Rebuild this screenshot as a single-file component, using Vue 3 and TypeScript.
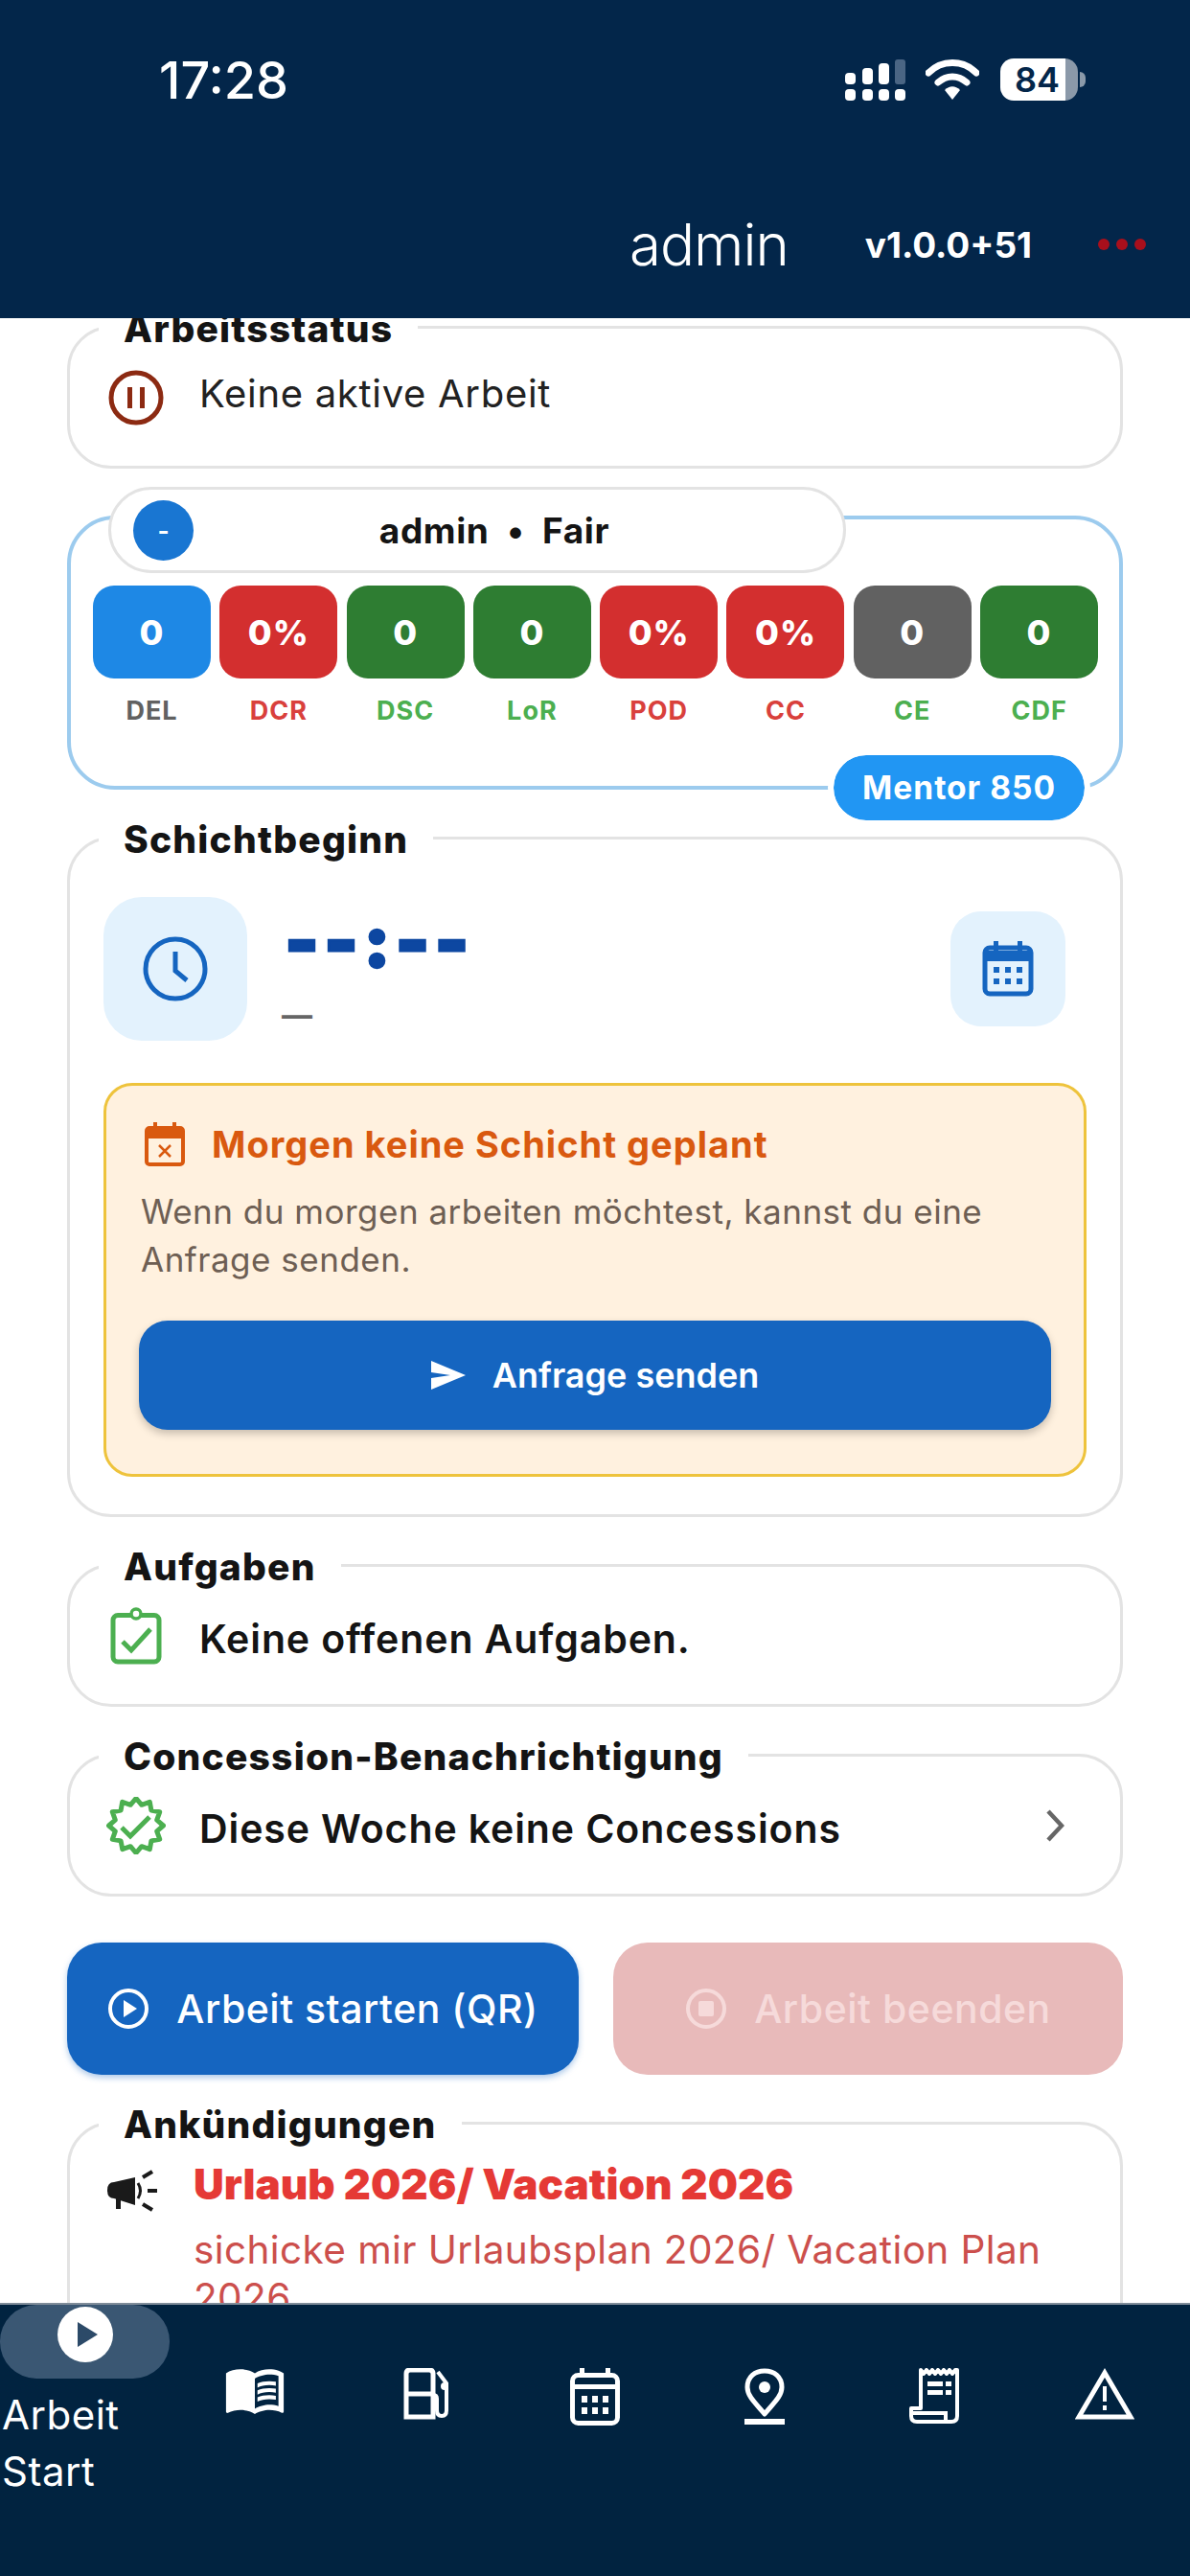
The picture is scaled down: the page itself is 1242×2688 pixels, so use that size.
<template>
  <div class="screen">
    <header class="top">
      <div class="status">
        <span class="clock">17:28</span>
        <div class="status-icons">
          <svg class="signal" viewBox="0 0 63 43">
            <rect x="0" y="14" width="11" height="12" rx="4" fill="#fff" />
            <rect x="18" y="9" width="11" height="17" rx="4" fill="#fff" />
            <rect x="35" y="4" width="11" height="22" rx="4" fill="#fff" />
            <rect x="52" y="0" width="11" height="26" rx="3" fill="#4a6584" />
            <rect x="0" y="31" width="11" height="12" rx="4" fill="#fff" />
            <rect x="18" y="31" width="11" height="12" rx="4" fill="#fff" />
            <rect x="35" y="31" width="11" height="12" rx="4" fill="#fff" />
            <rect x="52" y="31" width="11" height="12" rx="4" fill="#fff" />
          </svg>
          <svg class="wifi" viewBox="0 0 56 43">
            <path d="M3 14 C17 0 39 0 53 14" fill="none" stroke="#fff" stroke-width="7" stroke-linecap="round" />
            <path d="M13 24 C22 16 34 16 43 24" fill="none" stroke="#fff" stroke-width="7" stroke-linecap="round" />
            <path d="M20 32 C25 27 31 27 36 32 L28 42 Z" fill="#fff" />
          </svg>
          <div class="battery"><span>84</span></div>
          <i class="battery-cap"></i>
        </div>
      </div>
      <div class="appbar">
        <span class="user">admin</span>
        <span class="version">v1.0.0+51</span>
        <span class="dots"><i></i><i></i><i></i></span>
      </div>
    </header>

    <main class="content">
      <section class="card row-card">
        <h3 class="card-title">Arbeitsstatus</h3>
        <div class="icon-slot">
          <svg width="58" height="58" viewBox="0 0 58 58">
            <circle cx="29" cy="29" r="26" fill="none" stroke="#8c2a12" stroke-width="5" />
            <rect x="20" y="18" width="5" height="22" fill="#8c2a12" />
            <rect x="33" y="18" width="5" height="22" fill="#8c2a12" />
          </svg>
        </div>
        <span class="plain-text">Keine aktive Arbeit</span>
      </section>

      <section class="score-card">
        <div class="score-head">
          <span class="avatar">-</span>
          <span class="score-name">admin&nbsp; •&nbsp; Fair</span>
        </div>
        <div class="tiles">
          <div v-for="t in tiles" :key="t.label" class="tile">
            <div :class="['tile-value', t.bg]">{{ t.value }}</div>
            <span :class="['tile-label', t.fg]">{{ t.label }}</span>
          </div>
        </div>
        <span class="mentor">Mentor 850</span>
      </section>

      <section class="card shift-card">
        <h3 class="card-title">Schichtbeginn</h3>
        <div class="shift-top">
          <div class="clock-box">
            <svg width="68" height="68" viewBox="0 0 68 68">
              <circle cx="34" cy="34" r="31" fill="none" stroke="#1565c0" stroke-width="5" />
              <path d="M34 16 V36 L46 46" fill="none" stroke="#1565c0" stroke-width="5" />
            </svg>
          </div>
          <div class="shift-time">
            <span class="time-value">--:--</span>
            <span class="time-sub">—</span>
          </div>
          <div class="cal-box">
            <svg width="54" height="58" viewBox="0 0 54 58">
              <rect x="3" y="7" width="48" height="48" rx="5" fill="none" stroke="#1565c0" stroke-width="5" />
              <rect x="3" y="10" width="48" height="11" fill="#1565c0" />
              <rect x="12" y="0" width="5" height="10" fill="#1565c0" />
              <rect x="37" y="0" width="5" height="10" fill="#1565c0" />
              <g fill="#1565c0">
                <rect x="12" y="27" width="6" height="6" /><rect x="24" y="27" width="6" height="6" /><rect x="36" y="27" width="6" height="6" />
                <rect x="12" y="39" width="6" height="6" /><rect x="24" y="39" width="6" height="6" /><rect x="36" y="39" width="6" height="6" />
              </g>
            </svg>
          </div>
        </div>
        <div class="notice">
          <div class="notice-head">
            <svg width="42" height="46" viewBox="0 0 42 46">
              <rect x="2" y="6" width="38" height="38" rx="3" fill="none" stroke="#d9590f" stroke-width="4" />
              <rect x="2" y="8" width="38" height="9" fill="#d9590f" />
              <rect x="9" y="0" width="4" height="8" fill="#d9590f" />
              <rect x="29" y="0" width="4" height="8" fill="#d9590f" />
              <path d="M15 24 L27 36 M27 24 L15 36" stroke="#d9590f" stroke-width="2.5" />
            </svg>
            <span class="notice-title">Morgen keine Schicht geplant</span>
          </div>
          <p class="notice-text">Wenn du morgen arbeiten möchtest, kannst du eine Anfrage senden.</p>
          <button class="request-btn">
            <svg width="36" height="30" viewBox="0 0 36 30">
              <path d="M0 0 L36 15 L0 30 L0 18 L20 15 L0 12 Z" fill="#fff" />
            </svg>
            Anfrage senden
          </button>
        </div>
      </section>

      <section class="card row-card">
        <h3 class="card-title">Aufgaben</h3>
        <div class="icon-slot">
          <svg width="54" height="60" viewBox="0 0 54 60">
            <rect x="3" y="8.5" width="48" height="48.5" rx="5" fill="none" stroke="#4caf50" stroke-width="5" />
            <circle cx="27" cy="7" r="5" fill="#fff" stroke="#4caf50" stroke-width="3.5" />
            <path d="M13 36 L22 45 L42 23" fill="none" stroke="#4caf50" stroke-width="5" />
          </svg>
        </div>
        <span class="strong-text">Keine offenen Aufgaben.</span>
      </section>

      <section class="card row-card">
        <h3 class="card-title">Concession-Benachrichtigung</h3>
        <div class="icon-slot">
          <svg width="62" height="60" viewBox="0 0 62 60">
            <path :d="badgePath" fill="none" stroke="#4caf50" stroke-width="5" stroke-linejoin="round" />
            <path d="M16 32 L25 41 L45 21" fill="none" stroke="#4caf50" stroke-width="5" />
          </svg>
        </div>
        <span class="strong-text">Diese Woche keine Concessions</span>
        <svg class="chevron" width="20" height="34" viewBox="0 0 20 34">
          <path d="M3 2 L17 17 L3 32" fill="none" stroke="#666" stroke-width="4.5" />
        </svg>
      </section>

      <div class="actions">
        <button class="action start">
          <svg width="44" height="44" viewBox="0 0 44 44">
            <circle cx="22" cy="22" r="19" fill="none" stroke="#fff" stroke-width="4" />
            <path d="M17 13 L31 22 L17 31 Z" fill="#fff" />
          </svg>
          Arbeit starten (QR)
        </button>
        <button class="action stop">
          <svg width="44" height="44" viewBox="0 0 44 44">
            <circle cx="22" cy="22" r="19" fill="none" stroke="#f6dada" stroke-width="4" />
            <rect x="14" y="14" width="16" height="16" rx="2" fill="#f6dada" />
          </svg>
          Arbeit beenden
        </button>
      </div>

      <section class="card news-card">
        <h3 class="card-title">Ankündigungen</h3>
        <div class="news-row">
          <svg class="megaphone" width="54" height="44" viewBox="0 0 54 44">
            <path d="M8 13 L30 8 V37 L8 30 Q1 30 1 21.5 Q1 13 8 13 Z" fill="#1a1a1a" />
            <rect x="10" y="29" width="5" height="12" fill="#1a1a1a" />
            <path d="M33 14 Q38 22 33 30" fill="none" stroke="#1a1a1a" stroke-width="3" />
            <path d="M38 8 L48 2 M43 22 H53 M38 36 L48 42" stroke="#1a1a1a" stroke-width="4" />
          </svg>
          <div class="news-body">
            <h4 class="news-title">Urlaub 2026/ Vacation 2026</h4>
            <p class="news-text">sichicke mir Urlaubsplan 2026/ Vacation Plan 2026</p>
          </div>
        </div>
      </section>
    </main>

    <nav class="bottom">
      <div class="nav-start">
        <div class="nav-pill">
          <svg width="58" height="58" viewBox="0 0 58 58">
            <circle cx="29" cy="29" r="29" fill="#fff" />
            <path d="M21 16 L42 29 L21 42 Z" fill="#2c4a68" />
          </svg>
        </div>
        <span class="nav-label">Arbeit<br />Start</span>
      </div>

      <div class="nav-item">
        <svg width="66" height="52" viewBox="0 0 24 19">
          <path fill="#fff" d="M21 1c-1.11-.35-2.33-.5-3.5-.5-1.95 0-4.05.4-5.5 1.5C10.55.9 8.45.5 6.5.5S2.45.9 1 2v14.65c0 .25.25.5.5.5.1 0 .15-.05.25-.05C3.1 16.45 5.05 16 6.5 16c1.95 0 4.05.4 5.5 1.5 1.35-.85 3.8-1.5 5.5-1.5 1.65 0 3.35.3 4.75 1.05.1.05.15.05.25.05.25 0 .5-.25.5-.5V2c-.6-.45-1.25-.75-2-1zm0 13.5c-1.1-.35-2.3-.5-3.5-.5-1.7 0-4.15.65-5.5 1.5V4c1.35-.85 3.8-1.5 5.5-1.5 1.2 0 2.4.15 3.5.5v11.5z" />
          <path fill="#fff" d="M17.5 6.5c.88 0 1.73.09 2.5.26V5.24C19.21 5.09 18.36 5 17.5 5c-1.7 0-3.24.29-4.5.83v1.66c1.13-.64 2.7-.99 4.5-.99zM13 8.49v1.66c1.13-.64 2.7-.99 4.5-.99.88 0 1.73.09 2.5.26V7.9c-.79-.15-1.64-.24-2.5-.24-1.7 0-3.24.3-4.5.83zM17.5 10.33c-1.7 0-3.24.29-4.5.83v1.66c1.13-.64 2.7-.99 4.5-.99.88 0 1.73.09 2.5.26v-1.52c-.79-.16-1.64-.24-2.5-.24z" />
        </svg>
      </div>

      <div class="nav-item">
        <svg class="gas" width="50" height="54" viewBox="0 0 50 54">
          <path d="M3 6 Q3 2 7 2 H27 Q31 2 31 6 V51 H3 Z" fill="none" stroke="#fff" stroke-width="5" />
          <path d="M3 27 H31" stroke="#fff" stroke-width="5" />
          <path d="M36 4 L45 16 V44 Q45 50 40 50 Q35 50 35 44 V32 Q35 28 31 28" fill="none" stroke="#fff" stroke-width="4" />
          <circle cx="43" cy="19" r="4" fill="#fff" />
        </svg>
      </div>

      <div class="nav-item">
        <svg width="52" height="60" viewBox="0 0 52 60">
          <rect x="2.5" y="7.5" width="47" height="50" rx="6" fill="none" stroke="#fff" stroke-width="5" />
          <rect x="2" y="17" width="48" height="5" fill="#fff" />
          <rect x="10" y="0" width="5" height="9" fill="#fff" />
          <rect x="37" y="0" width="5" height="9" fill="#fff" />
          <g fill="#fff">
            <rect x="12" y="29" width="6" height="7" /><rect x="23" y="29" width="6" height="7" /><rect x="34" y="29" width="6" height="7" />
            <rect x="12" y="41" width="6" height="7" /><rect x="23" y="41" width="6" height="7" /><rect x="34" y="41" width="6" height="7" />
          </g>
        </svg>
      </div>

      <div class="nav-item">
        <svg width="42" height="60" viewBox="0 0 42 60">
          <path d="M21 48 C13 38 3 30 3 20 C3 9 11 3 21 3 C31 3 39 9 39 20 C39 30 29 38 21 48 Z" fill="none" stroke="#fff" stroke-width="5" stroke-linejoin="round" />
          <circle cx="21" cy="20" r="6" fill="#fff" />
          <rect x="0" y="53" width="42" height="6" fill="#fff" />
        </svg>
      </div>

      <div class="nav-item">
        <svg width="54" height="58" viewBox="0 0 54 58">
          <path d="M12 2 L15 6 L18 2 L21 6 L24 2 L27 6 L30 2 L33 6 L36 2 L39 6 L42 2 L45 6 L48 2 L50 2 V50 Q50 56 44 56 H8 Q2 56 2 50 V42 H12 Z" fill="none" stroke="#fff" stroke-width="4" stroke-linejoin="round" />
          <path d="M4 47 H38 V54" fill="none" stroke="#fff" stroke-width="4" />
          <g fill="#fff">
            <rect x="19" y="14" width="16" height="5" /><rect x="38" y="14" width="6" height="5" />
            <rect x="19" y="23" width="16" height="5" /><rect x="38" y="23" width="6" height="5" />
          </g>
        </svg>
      </div>

      <div class="nav-item">
        <svg width="62" height="54" viewBox="0 0 62 54">
          <path d="M31 5 L58 51 H4 Z" fill="none" stroke="#fff" stroke-width="5" stroke-linejoin="miter" />
          <rect x="29" y="19" width="4" height="16" fill="#fff" />
          <rect x="29" y="39" width="4" height="5" fill="#fff" />
        </svg>
      </div>
    </nav>
  </div>
</template>

<script setup lang="ts">
interface Tile {
  label: string
  value: string
  bg: string
  fg: string
}

const tiles: Tile[] = [
  { label: 'DEL', value: '0', bg: 'blue', fg: 'gray-text' },
  { label: 'DCR', value: '0%', bg: 'red', fg: 'red-text' },
  { label: 'DSC', value: '0', bg: 'green', fg: 'green-text' },
  { label: 'LoR', value: '0', bg: 'green', fg: 'green-text' },
  { label: 'POD', value: '0%', bg: 'red', fg: 'red-text' },
  { label: 'CC', value: '0%', bg: 'red', fg: 'red-text' },
  { label: 'CE', value: '0', bg: 'gray', fg: 'green-text' },
  { label: 'CDF', value: '0', bg: 'green', fg: 'green-text' }
]

// 12-point seal outline
const badgePath = Array.from({ length: 24 }, (_, i) => {
  const r = i % 2 === 0 ? 28.5 : 22.5
  const a = (i * Math.PI) / 12 - Math.PI / 2
  const x = (31 + r * Math.cos(a)).toFixed(1)
  const y = (30 + r * Math.sin(a)).toFixed(1)
  return `${i === 0 ? 'M' : 'L'}${x} ${y}`
}).join(' ') + ' Z'
</script>

<style>
html,
body {
  margin: 0;
  background: #fff;
}
</style>

<style scoped>
.screen {
  width: 1242px;
  height: 2688px;
  display: flex;
  flex-direction: column;
  overflow: hidden;
  font-family: Inter, "Noto Sans", sans-serif;
  color: #141414;
}

/* header */
.top {
  height: 332px;
  flex: none;
  background: #03264a;
  color: #fff;
  box-sizing: border-box;
  padding-top: 52px;
}

.status {
  display: flex;
  justify-content: space-between;
  align-items: center;
  padding: 0 109px 0 166px;
  height: 62px;
}

.clock {
  font-size: 54px;
  font-weight: 500;
  letter-spacing: 0;
}

.status-icons {
  display: flex;
  align-items: center;
}

.signal {
  width: 63px;
  height: 43px;
  margin-right: 21px;
}

.wifi {
  width: 56px;
  height: 43px;
  margin-right: 22px;
}

.battery {
  width: 81px;
  height: 44px;
  border-radius: 14px;
  background: linear-gradient(90deg, #fff 84%, #8b99a9 84%);
  color: #03264a;
  font-size: 36px;
  font-weight: 600;
  display: flex;
  align-items: center;
  padding-left: 15px;
  box-sizing: border-box;
}

.battery-cap {
  width: 6px;
  height: 16px;
  margin-left: 2px;
  background: #8b99a9;
  border-radius: 0 6px 6px 0;
}

.appbar {
  display: flex;
  justify-content: flex-end;
  align-items: center;
  height: 80px;
  margin-top: 101px;
  padding-right: 46px;
}

.user {
  font-size: 60px;
  font-weight: 300;
  letter-spacing: -1px;
  margin-right: 80px;
}

.version {
  font-size: 37px;
  font-weight: 700;
  margin-right: 69px;
}

.dots {
  display: flex;
  gap: 7px;
}

.dots i {
  width: 12px;
  height: 12px;
  border-radius: 50%;
  background: #a80f1c;
}

/* content */
.content {
  flex: 1;
  min-height: 0;
  overflow: hidden;
  display: flex;
  flex-direction: column;
  gap: 49px;
  padding: 8px 70px 0;
  background: #fff;
}

.card {
  position: relative;
  flex: none;
  background: #fff;
  border: 3px solid #e3e3e3;
  border-radius: 46px;
}

.card-title {
  position: absolute;
  top: -23px;
  left: 30px;
  margin: 0;
  padding: 0 26px;
  background: #fff;
  font-size: 39px;
  line-height: 46px;
  font-weight: 800;
  letter-spacing: 1.2px;
  color: #141414;
}

.row-card {
  height: 149px;
  box-sizing: border-box;
  display: flex;
  align-items: center;
  padding: 0 58px 0 38px;
}

.icon-slot {
  flex: none;
  width: 62px;
  margin-right: 35px;
  display: flex;
  justify-content: center;
}

.plain-text {
  font-size: 40px;
  letter-spacing: 0.7px;
  color: #222;
  margin-bottom: 8px;
}

.strong-text {
  font-size: 41px;
  font-weight: 600;
  letter-spacing: 0.9px;
  flex: 1;
  margin-top: 6px;
}

.chevron {
  flex: none;
}

/* score */
.score-card {
  position: relative;
  flex: none;
  height: 286px;
  box-sizing: border-box;
  border: 4px solid #9ccbee;
  border-radius: 50px;
  padding: 69px 23px 0;
}

.score-head {
  position: absolute;
  top: -34px;
  left: 39px;
  width: 770px;
  height: 90px;
  box-sizing: border-box;
  background: #fff;
  border: 3px solid #e3e3e3;
  border-radius: 45px;
  display: flex;
  align-items: center;
  padding-left: 23px;
}

.avatar {
  width: 63px;
  height: 63px;
  border-radius: 50%;
  background: #1976d2;
  color: #fff;
  font-size: 26px;
  font-weight: 700;
  display: flex;
  align-items: center;
  justify-content: center;
  flex: none;
}

.score-name {
  flex: 1;
  text-align: center;
  font-size: 37px;
  font-weight: 700;
  letter-spacing: 0.6px;
  padding-right: 50px;
}

.tiles {
  display: grid;
  grid-template-columns: repeat(8, 123px);
  column-gap: 9.3px;
}

.tile {
  display: flex;
  flex-direction: column;
  align-items: center;
}

.tile-value {
  width: 100%;
  height: 97px;
  border-radius: 22px;
  display: flex;
  align-items: center;
  justify-content: center;
  color: #fff;
  font-size: 36px;
  font-weight: 800;
  letter-spacing: 1px;
}

.blue { background: #1e88e5; }
.red { background: #d32f2f; }
.green { background: #2e7d32; }
.gray { background: #616161; }

.tile-label {
  margin-top: 19px;
  font-size: 27px;
  line-height: 30px;
  font-weight: 700;
  letter-spacing: 1px;
}

.gray-text { color: #616161; }
.red-text { color: #d9403c; }
.green-text { color: #4caf50; }

.mentor {
  position: absolute;
  right: 36px;
  bottom: -36px;
  padding: 0 30px;
  height: 68px;
  line-height: 68px;
  background: #2196f3;
  color: #fff;
  border-radius: 34px;
  font-size: 33.5px;
  font-weight: 700;
  letter-spacing: 1px;
  outline: 6px solid #fff;
}

/* shift */
.shift-card {
  height: 710px;
  box-sizing: border-box;
  padding: 60px 35px 0;
}

.shift-top {
  display: flex;
  align-items: center;
  height: 150px;
}

.clock-box {
  width: 150px;
  height: 150px;
  border-radius: 40px;
  background: #e3f2fd;
  display: flex;
  align-items: center;
  justify-content: center;
  flex: none;
}

.shift-time {
  flex: 1;
  display: flex;
  flex-direction: column;
  padding-left: 39px;
  height: 150px;
}

.time-value {
  font-size: 76px;
  line-height: 90px;
  font-weight: 900;
  color: #0d47a1;
  letter-spacing: 5px;
  -webkit-text-stroke: 2.5px #0d47a1;
}

.time-sub {
  font-size: 32px;
  line-height: 40px;
  font-weight: 700;
  color: #666;
  margin-top: 14px;
  margin-left: -3px;
}

.cal-box {
  width: 120px;
  height: 120px;
  border-radius: 32px;
  background: #e3f2fd;
  display: flex;
  align-items: center;
  justify-content: center;
  flex: none;
  margin-right: 22px;
}

.notice {
  margin-top: 44px;
  height: 411px;
  box-sizing: border-box;
  background: #fff1df;
  border: 3px solid #eec33c;
  border-radius: 30px;
  padding: 38px 34px 0;
}

.notice-head {
  display: flex;
  align-items: center;
  gap: 28px;
  padding-left: 6px;
}

.notice-title {
  font-size: 38px;
  line-height: 46px;
  font-weight: 700;
  letter-spacing: 1px;
  color: #d9590f;
}

.notice-text {
  margin: 22px 0 0;
  padding-left: 2px;
  font-size: 35px;
  line-height: 50px;
  letter-spacing: 0.5px;
  color: #6e5f54;
}

.request-btn {
  margin-top: 39px;
  width: 100%;
  height: 114px;
  border: none;
  border-radius: 30px;
  background: #1565c0;
  color: #fff;
  font-family: inherit;
  font-size: 36px;
  font-weight: 600;
  display: flex;
  align-items: center;
  justify-content: center;
  gap: 28px;
  box-shadow: 0 4px 8px rgba(0, 0, 0, 0.22);
}

/* actions */
.actions {
  display: grid;
  grid-template-columns: 534px 532px;
  column-gap: 36px;
  flex: none;
  margin-top: -1px;
}

.action {
  height: 138px;
  border: none;
  border-radius: 36px;
  font-family: inherit;
  font-size: 41px;
  font-weight: 500;
  letter-spacing: 0.5px;
  display: flex;
  align-items: center;
  justify-content: center;
  gap: 28px;
}

.action.start {
  background: #1565c0;
  color: #fff;
  box-shadow: 0 3px 6px rgba(21, 101, 192, 0.35);
}

.action.stop {
  background: #e8baba;
  color: #f6dada;
}

/* announcements */
.news-card {
  height: 400px;
  box-sizing: border-box;
  padding: 36px 40px 0 38px;
}

.news-row {
  display: flex;
  align-items: flex-start;
  gap: 37px;
}

.megaphone {
  flex: none;
  margin-top: 11px;
}

.news-title {
  margin: 0;
  font-size: 44px;
  line-height: 52px;
  font-weight: 900;
  color: #e53935;
}

.news-text {
  margin: 18px 0 0;
  font-size: 40.5px;
  line-height: 50px;
  letter-spacing: 0.4px;
  color: #cc4f4c;
}

/* bottom nav */
.bottom {
  height: 285px;
  flex: none;
  background: #012340;
  border-top: 2px solid #7f8c99;
  box-sizing: border-box;
  display: grid;
  grid-template-columns: repeat(7, 177.4px);
  color: #fff;
}

.nav-start {
  display: flex;
  flex-direction: column;
}

.nav-pill {
  height: 75px;
  background: #3a5773;
  border-radius: 38px;
  display: flex;
  justify-content: center;
  padding-top: 2px;
}

.nav-label {
  margin-top: 8px;
  padding-left: 2px;
  font-size: 42px;
  line-height: 59px;
  letter-spacing: 0.5px;
}

.nav-item {
  display: flex;
  justify-content: center;
  padding-top: 66px;
  height: 60px;
}

.gas {
  margin-left: 5px;
}
</style>
